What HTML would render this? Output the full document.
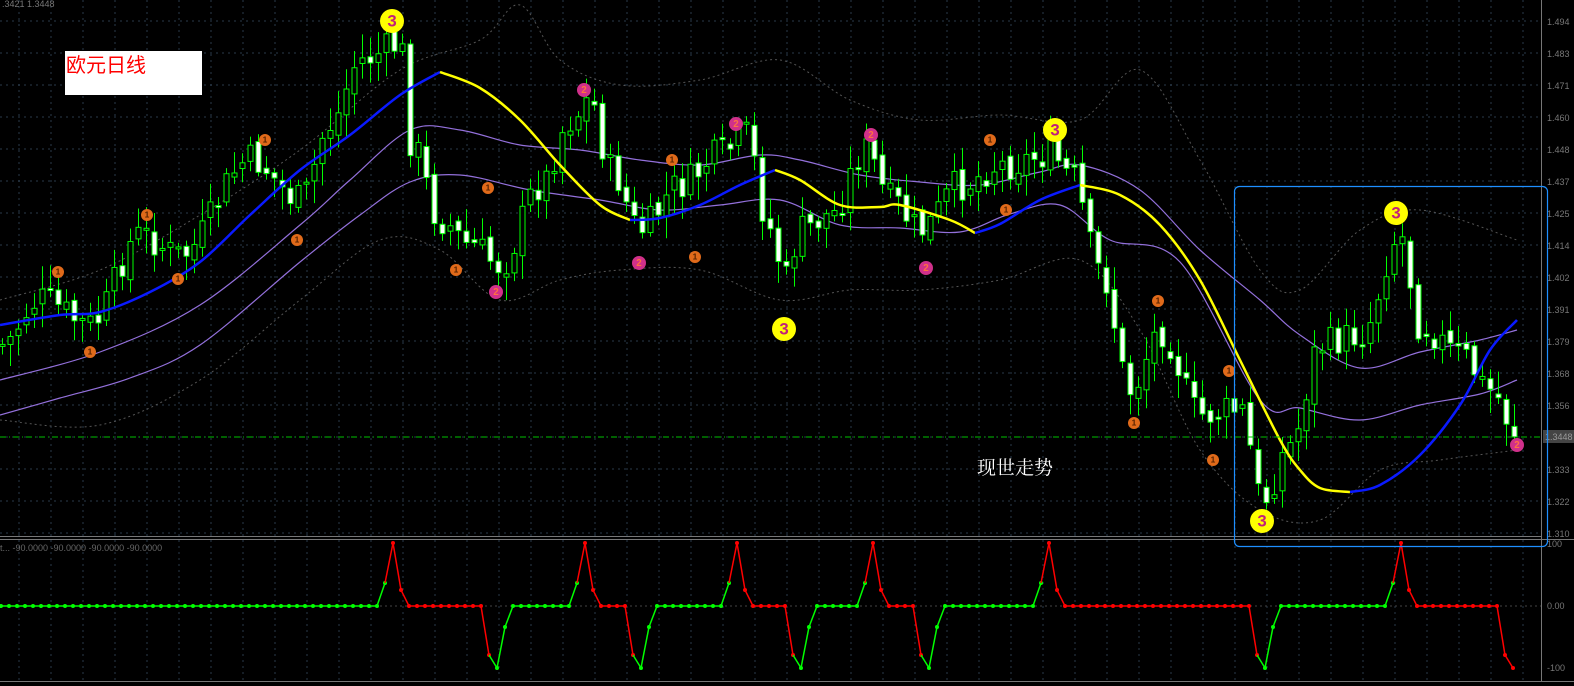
<!DOCTYPE html>
<html><head><meta charset="utf-8"><style>
html,body{margin:0;padding:0;background:#000;width:1574px;height:686px;overflow:hidden}
svg{display:block}
text{font-family:"Liberation Sans",sans-serif}
</style></head><body>
<svg id="s" width="1574" height="686" xmlns="http://www.w3.org/2000/svg">
<rect width="1574" height="686" fill="#000"/>
<g id="grid"></g>
<g id="ind"></g>
<g id="bb" fill="none" stroke="#555" stroke-width="1" stroke-dasharray="2,3"></g>
<g id="purple" fill="none" stroke="#9370db" stroke-width="1.2"></g>
<g id="candles"></g>
<g id="ma" fill="none" stroke-width="2.5"></g>
<g id="marks"></g>
<line x1="0" y1="437" x2="1541" y2="437" stroke="#00c000" stroke-width="1" stroke-dasharray="6,3,1,3"/>
<rect x="1543" y="430" width="31" height="13" fill="#444"/>
<text x="1545" y="440" font-size="9" fill="#999">1.3448</text>
<text x="2" y="7" font-size="9" fill="#777">.3421 1.3448</text>
<text x="0" y="551" font-size="9" fill="#666">t...  -90.0000 -90.0000 -90.0000 -90.0000</text>
<rect x="65" y="51" width="137" height="44" fill="#fff"/>
<text x="66" y="72" font-size="20" fill="#f00" style='font-family:"Liberation Sans","Noto Sans CJK SC",sans-serif'>欧元日线</text>
<text x="977" y="474" font-size="19" fill="#fff" style='font-family:"Liberation Serif","Noto Serif CJK SC",serif'>现世走势</text>
<rect x="1234.5" y="186.5" width="313" height="360" rx="5" fill="none" stroke="#1e8fff" stroke-width="1.2"/>
</svg>
<script>
var NS="http://www.w3.org/2000/svg";
function el(p,t,a){var e=document.createElementNS(NS,t);for(var k in a)e.setAttribute(k,a[k]);document.getElementById(p).appendChild(e);return e;}
for(var x=19;x<1541;x+=32){el("grid","line",{x1:x,y1:0,x2:x,y2:536,stroke:"#2a3a4a","stroke-dasharray":"2,4"});el("grid","line",{x1:x,y1:540,x2:x,y2:681,stroke:"#2a3a4a","stroke-dasharray":"2,4"});}
var prices=["1.494","1.483","1.471","1.460","1.448","1.437","1.425","1.414","1.402","1.391","1.379","1.368","1.356","1.344","1.333","1.322","1.310"];
for(var i=0;i<17;i++){var y=21+32*i;el("grid","line",{x1:0,y1:y,x2:1541,y2:y,stroke:"#2a3a4a","stroke-dasharray":"2,4"});
 if(i!=13){var t=el("grid","text",{x:1547,y:y+4,"font-size":"9",fill:"#777"});t.textContent=prices[i];}}
el("grid","line",{x1:0,y1:606,x2:1541,y2:606,stroke:"#444","stroke-dasharray":"2,3"});
el("grid","line",{x1:1541.5,y1:0,x2:1541.5,y2:682,stroke:"#777"});
el("grid","line",{x1:0,y1:536.5,x2:1541,y2:536.5,stroke:"#777"});
el("grid","line",{x1:0,y1:539.5,x2:1574,y2:539.5,stroke:"#777"});
el("grid","line",{x1:0,y1:681.5,x2:1574,y2:681.5,stroke:"#777"});
[["100",547],["0.00",609],["-100",671]].forEach(function(a){var t=el("grid","text",{x:1547,y:a[1],"font-size":"9",fill:"#777"});t.textContent=a[0];});
function interp(pts,x){for(var i=0;i<pts.length-1;i++){if(x>=pts[i][0]&&x<=pts[i+1][0]){var f=(x-pts[i][0])/(pts[i+1][0]-pts[i][0]);f=(1-Math.cos(f*Math.PI))/2;return pts[i][1]+f*(pts[i+1][1]-pts[i][1]);}}return pts[pts.length-1][1];}
function poly(g,p,attrs){var d="M"+p[0][0]+","+p[0][1];
 for(var i=0;i<p.length-1;i++){var p0=p[i-1]||p[i],p1=p[i],p2=p[i+1],p3=p[i+2]||p2;
  var c1x=p1[0]+(p2[0]-p0[0])/6,c1y=p1[1]+(p2[1]-p0[1])/6,c2x=p2[0]-(p3[0]-p1[0])/6,c2y=p2[1]-(p3[1]-p1[1])/6;
  d+=" C"+c1x.toFixed(1)+","+c1y.toFixed(1)+" "+c2x.toFixed(1)+","+c2y.toFixed(1)+" "+p2[0]+","+p2[1];}
 var a=attrs||{};a.d=d;return el(g,"path",a);}
var path=[[0,345],[40,300],[90,325],[140,235],[180,255],[250,160],[300,200],[330,125],[360,60],[400,45],[410,140],[440,220],[470,245],[500,265],[540,185],[570,120],[590,100],[610,170],[640,230],[680,185],[720,155],[745,135],[770,230],[785,280],[800,230],[830,215],[865,150],[890,200],[920,230],[960,185],[1000,165],[1050,155],[1070,175],[1100,270],[1130,390],[1160,330],[1200,415],[1240,410],[1262,500],[1290,445],[1320,345],[1360,335],[1400,235],[1420,325],[1460,355],[1490,390],[1517,432]];
var seed=7;function rnd(){seed=(seed*9301+49297)%233280;return seed/233280;}
var prev=interp(path,0);
for(var x=2;x<=1517;x+=8){
 var c=interp(path,x)+(rnd()-0.5)*34;var o=prev+(rnd()-0.5)*10;
 var hi=Math.min(o,c)-4-rnd()*20,lo=Math.max(o,c)+4+rnd()*20;
 el("candles","line",{x1:x+0.5,y1:hi,x2:x+0.5,y2:lo,stroke:"#00ff00","stroke-width":1});
 var bt=Math.min(o,c),bh=Math.max(2,Math.abs(o-c));
 el("candles","rect",{x:x-2,y:bt,width:5,height:bh,fill:(c>o)?"#fff":"#000",stroke:"#00ff00","stroke-width":1});
 prev=c;}
poly("bb",[[0,300],[100,270],[200,215],[300,150],[400,70],[480,40],[520,5],[560,60],[620,85],[700,80],[780,60],[850,100],[920,120],[1000,115],[1080,120],[1140,70],[1200,160],[1260,270],[1300,290],[1360,230],[1420,210],[1517,240]]);
poly("bb",[[0,420],[100,425],[200,380],[300,300],[380,240],[440,250],[500,300],[560,280],[620,270],[700,270],[780,300],[850,290],[920,290],[1000,280],[1080,260],[1140,330],[1200,450],[1260,510],[1320,520],[1380,470],[1440,460],[1517,450]]);
poly("purple",[[0,380],[100,352],[200,305],[300,225],[350,180],[410,130],[460,130],[520,145],[580,150],[640,160],[700,165],[760,155],[800,160],[860,175],[920,182],[980,185],[1040,172],[1080,165],[1140,190],[1200,250],[1260,300],[1300,335],[1360,368],[1420,352],[1480,340],[1517,330]]);
poly("purple",[[0,415],[60,398],[130,378],[200,345],[300,262],[360,215],[410,182],[460,175],[530,190],[600,200],[660,210],[720,205],[780,200],[840,225],[900,228],[960,232],[1010,214],[1060,205],[1110,240],[1180,262],[1260,400],[1300,408],[1360,420],[1420,405],[1480,394],[1517,380]]);
var blue="#0a1aff",yel="#ffff00";
var segs=[[blue,[[0,325],[60,315],[100,312],[150,292],[200,262],[250,215],[300,170],[350,135],[400,95],[440,72]]],
[yel,[[440,72],[480,88],[520,120],[560,165],[600,205],[630,220]]],
[blue,[[630,220],[660,218],[700,205],[740,185],[775,170]]],
[yel,[[775,170],[800,180],[840,205],[880,207],[900,205],[950,220],[975,233]]],
[blue,[[975,233],[1000,224],[1040,200],[1080,185]]],
[yel,[[1080,185],[1120,195],[1160,225],[1200,280],[1240,360],[1280,440],[1300,470],[1320,488],[1350,492]]],
[blue,[[1350,492],[1380,485],[1420,455],[1460,405],[1490,350],[1517,320]]]];
segs.forEach(function(s){poly("ma",s[1],{stroke:s[0]});});
function mark(x,y,r,fill,txt,tc){el("marks","circle",{cx:x,cy:y,r:r,fill:fill});var t=el("marks","text",{x:x,y:y+r*0.45,"font-size":r*1.4,fill:tc,"text-anchor":"middle","font-weight":"bold"});t.textContent=txt;}
[[58,272],[90,352],[147,215],[178,279],[265,140],[297,240],[456,270],[488,188],[672,160],[695,257],[990,140],[1006,210],[1158,301],[1134,423],[1213,460],[1229,371]].forEach(function(p){mark(p[0],p[1],6,"#e06a1a","1","#552200");});
[[584,90],[496,292],[639,263],[736,124],[871,135],[926,268],[1517,445]].forEach(function(p){mark(p[0],p[1],7,"#d0308a","2","#ff7040");});
[[392,21],[1055,130],[1396,213],[784,329],[1262,521]].forEach(function(p){mark(p[0],p[1],12,"#ffff00","3","#c0207a");});
var peaks=[393,585,736,872,1052,1397],troughs=[498,640,800,930,1262];
peaks=peaks.map(function(p){return 1+Math.round((p-1)/8)*8;});troughs=troughs.map(function(p){return 1+Math.round((p-1)/8)*8;});
function yv(x){
 for(var i=0;i<peaks.length;i++){var d=x-peaks[i];if(d>=-16&&d<=16){return [606,583,543,590,606][Math.round(d/8)+2];}}
 for(var i=0;i<troughs.length;i++){var d=x-troughs[i];if(d>=-16&&d<=16){return [606,655,668,627,606][Math.round(d/8)+2];}}
 if(x>=1501){return [606,655,668][Math.round((x-1501)/8)];}
 return 606;}
function col(x){
 var ev=[];peaks.forEach(function(p){ev.push([p,"r"]);});troughs.forEach(function(t){ev.push([t,"g"]);});ev.sort(function(a,b){return a[0]-b[0];});
 var c="#00ff00";ev.forEach(function(e){if(x>=e[0])c=e[1]=="r"?"#ff0000":"#00ff00";});
 if(x>=1501)c="#ff0000";return c;}
var xs=[];for(var x=1;x<=1517;x+=8)xs.push(x);
for(var i=0;i<xs.length;i++){var x=xs[i],y=yv(x),c=col(x);
 if(i>0){el("ind","line",{x1:xs[i-1],y1:yv(xs[i-1]),x2:x,y2:y,stroke:c,"stroke-width":1.5});}
 el("ind","circle",{cx:x,cy:y,r:2,fill:c});}
</script>
</body></html>
